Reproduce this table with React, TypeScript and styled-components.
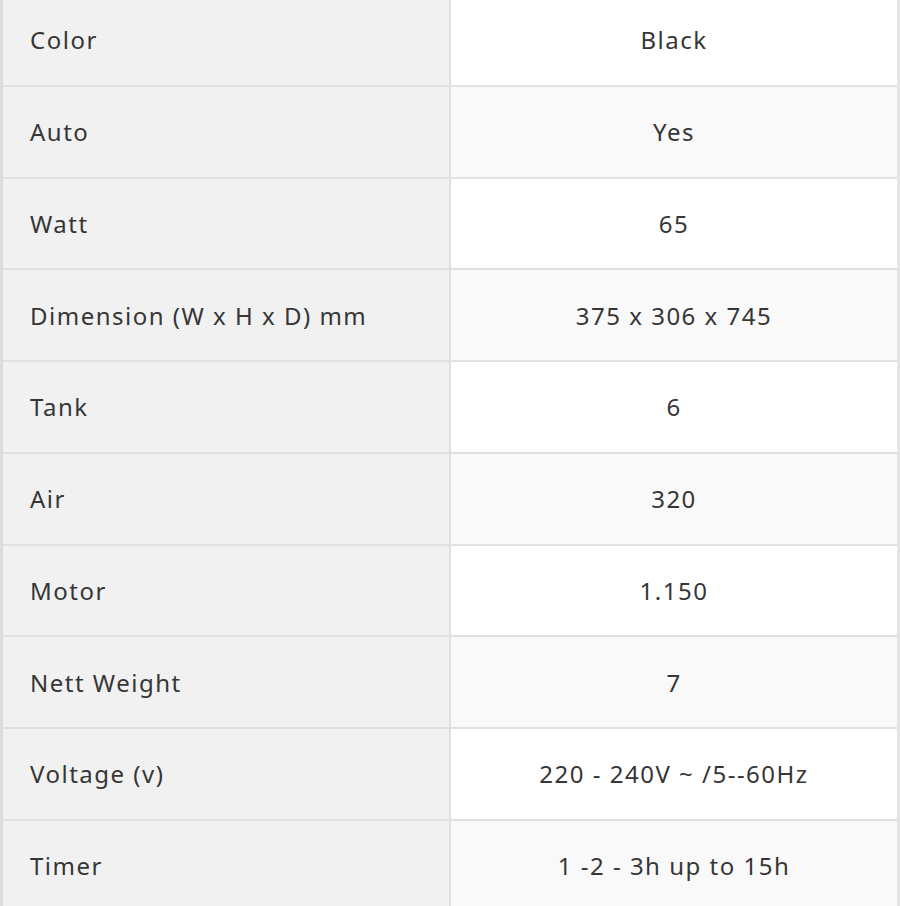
import React from "react";
import styled, { createGlobalStyle } from "styled-components";

const Global = createGlobalStyle`
  html, body { margin: 0; padding: 0; background: #ffffff; overflow: hidden; }
  body { font-family: "Noto Sans", "Open Sans", sans-serif; }
`;

const Table = styled.div`
  width: 900px;
  margin-top: -5px;
  box-sizing: border-box;
  border-left: 3px solid #dcdcdc;
  border-right: 3px solid #e4e4e4;
`;

const Row = styled.div<{ $odd: boolean }>`
  display: grid;
  grid-template-columns: 448px 1fr;
  height: 91.75px;
  box-sizing: border-box;
  border-bottom: 2px solid #e0e0e0;
  background: ${(p) => (p.$odd ? "#f9f9f9" : "#ffffff")};
`;

const Label = styled.div`
  display: flex;
  align-items: center;
  padding-left: 27px;
  background: #f1f1f1;
  border-right: 2px solid #e0e0e0;
  font-size: 24px;
  letter-spacing: 1.5px;
  color: #363636;
`;

const Value = styled.div`
  display: flex;
  align-items: center;
  justify-content: center;
  font-size: 24px;
  letter-spacing: 1.5px;
  color: #363636;
`;

const rows: [string, string][] = [
  ["Color", "Black"],
  ["Auto", "Yes"],
  ["Watt", "65"],
  ["Dimension (W x H x D) mm", "375 x 306 x 745"],
  ["Tank", "6"],
  ["Air", "320"],
  ["Motor", "1.150"],
  ["Nett Weight", "7"],
  ["Voltage (v)", "220 - 240V ~ /5--60Hz"],
  ["Timer", "1 -2 - 3h up to 15h"],
];

export default function App() {
  return (
    <>
      <Global />
      <Table>
        {rows.map(([k, v], i) => (
          <Row key={k} $odd={i % 2 === 1}>
            <Label>{k}</Label>
            <Value>{v}</Value>
          </Row>
        ))}
      </Table>
    </>
  );
}
